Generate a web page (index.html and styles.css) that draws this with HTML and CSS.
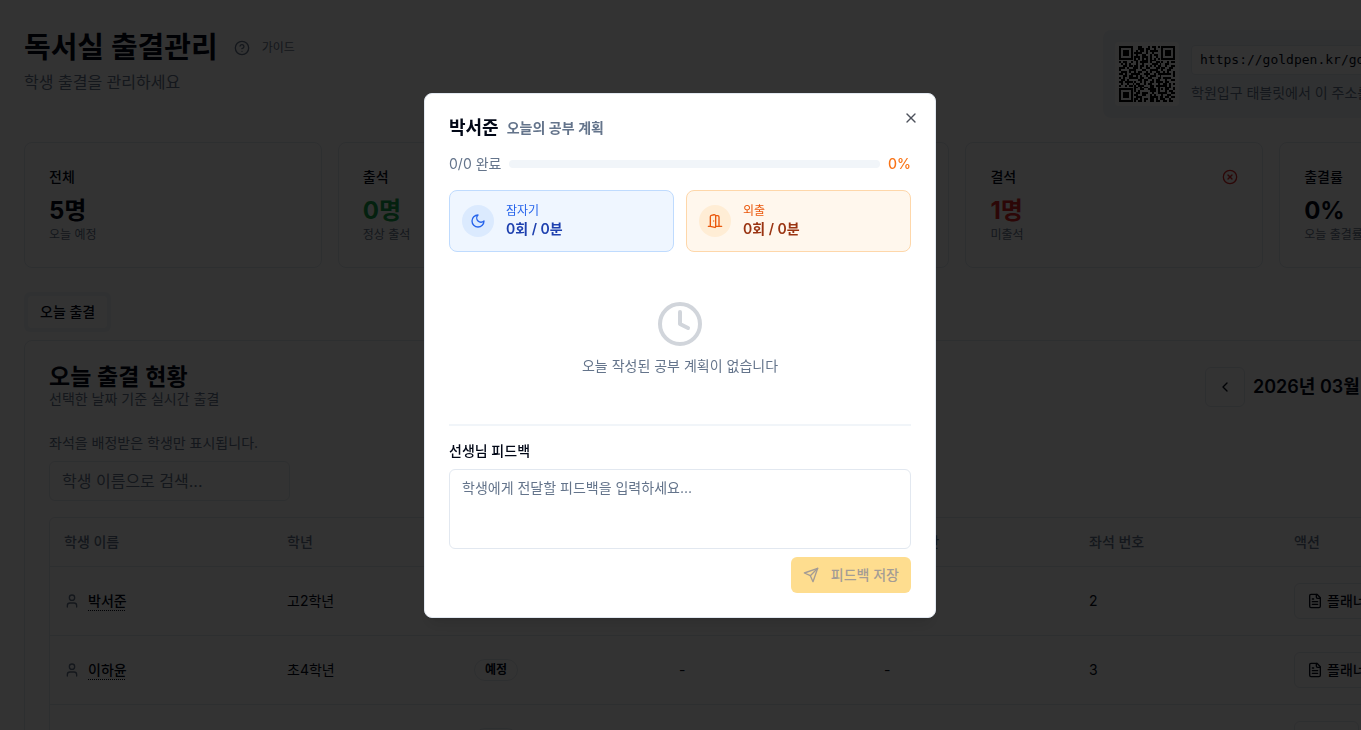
FILE: index.html
```html
<!DOCTYPE html>
<html lang="ko">
<head>
<meta charset="utf-8">
<title>독서실 출결관리</title>
<link rel="stylesheet" href="styles.css">
</head>
<body>
<main class="page">
  <header class="page-header">
    <div>
      <div class="title-row">
        <h1 class="page-title">독서실 출결관리</h1>
        <button class="guide" type="button">
          <svg class="icon" viewBox="0 0 24 24"><circle cx="12" cy="12" r="10"/><path d="M9.09 9a3 3 0 0 1 5.83 1c0 2-3 3-3 3"/><path d="M12 17h.01"/></svg>
          가이드
        </button>
      </div>
      <p class="page-subtitle">학생 출결을 관리하세요</p>
    </div>
    <section class="kiosk">
      <div class="qr-tile"><svg class="qr" id="qr" viewBox="0 0 29 29" shape-rendering="crispEdges" role="img" aria-label="QR"></svg></div>
      <div class="kiosk-info">
        <code class="kiosk-url">https://goldpen.kr/goldpen/attendance</code>
        <p class="kiosk-note">학원입구 태블릿에서 이 주소를 열어주세요</p>
      </div>
    </section>
  </header>

  <section class="stats">
    <article class="card stat"><h2 class="stat-label">전체</h2><p class="stat-value">5명</p><p class="stat-note">오늘 예정</p></article>
    <article class="card stat"><h2 class="stat-label">출석</h2><p class="stat-value green">0명</p><p class="stat-note">정상 출석</p></article>
    <article class="card stat"><h2 class="stat-label">지각</h2><p class="stat-value">0명</p><p class="stat-note">지각</p></article>
    <article class="card stat">
      <h2 class="stat-label">결석 <svg class="icon red" viewBox="0 0 24 24"><circle cx="12" cy="12" r="10"/><path d="m15 9-6 6"/><path d="m9 9 6 6"/></svg></h2>
      <p class="stat-value red">1명</p><p class="stat-note">미출석</p>
    </article>
    <article class="card stat"><h2 class="stat-label">출결률</h2><p class="stat-value">0%</p><p class="stat-note">오늘 출결률</p></article>
  </section>

  <div class="tabs"><button class="tab" type="button">오늘 출결</button></div>

  <section class="card today">
    <header class="today-header">
      <div>
        <h2 class="today-title">오늘 출결 현황</h2>
        <p class="muted">선택한 날짜 기준 실시간 출결</p>
      </div>
      <div class="date-nav">
        <button class="square-button" type="button" aria-label="이전 날짜"><svg class="icon" viewBox="0 0 24 24"><path d="m15 18-6-6 6-6"/></svg></button>
        <strong class="date">2026년 03월 05일 (목)</strong>
      </div>
    </header>
    <label class="muted search-label" for="search">좌석을 배정받은 학생만 표시됩니다.</label>
    <input class="search" id="search" type="text" placeholder="학생 이름으로 검색...">
    <div class="table-frame">
      <table class="students">
        <colgroup><col class="col-name"><col class="col-grade"><col class="col-mid"><col class="col-mid"><col class="col-mid"><col class="col-mid"><col></colgroup>
        <thead><tr><th>학생 이름</th><th>학년</th><th>상태</th><th>등원 시간</th><th>하원 시간</th><th>좌석 번호</th><th>액션</th></tr></thead>
        <tbody>
          <tr>
            <td><div class="student"><svg class="icon" viewBox="0 0 24 24"><path d="M19 21v-2a4 4 0 0 0-4-4H9a4 4 0 0 0-4 4v2"/><circle cx="12" cy="7" r="4"/></svg><button class="name" type="button">박서준</button></div></td>
            <td>고2학년</td><td><span class="badge">예정</span></td><td>-</td><td>-</td><td>2</td>
            <td><button class="planner" type="button"><svg class="icon" viewBox="0 0 24 24"><path d="M15 2H6a2 2 0 0 0-2 2v16a2 2 0 0 0 2 2h12a2 2 0 0 0 2-2V7Z"/><path d="M14 2v4a2 2 0 0 0 2 2h4"/><path d="M10 9H8"/><path d="M16 13H8"/><path d="M16 17H8"/></svg>플래너</button></td>
          </tr>
          <tr>
            <td><div class="student"><svg class="icon" viewBox="0 0 24 24"><path d="M19 21v-2a4 4 0 0 0-4-4H9a4 4 0 0 0-4 4v2"/><circle cx="12" cy="7" r="4"/></svg><button class="name" type="button">이하윤</button></div></td>
            <td>초4학년</td><td><span class="badge">예정</span></td><td>-</td><td>-</td><td>3</td>
            <td><button class="planner" type="button"><svg class="icon" viewBox="0 0 24 24"><path d="M15 2H6a2 2 0 0 0-2 2v16a2 2 0 0 0 2 2h12a2 2 0 0 0 2-2V7Z"/><path d="M14 2v4a2 2 0 0 0 2 2h4"/><path d="M10 9H8"/><path d="M16 13H8"/><path d="M16 17H8"/></svg>플래너</button></td>
          </tr>
          <tr>
            <td></td><td></td><td><span class="badge">예정</span></td><td></td><td></td><td></td>
            <td><button class="planner" type="button">플래너</button></td>
          </tr>
        </tbody>
      </table>
    </div>
  </section>
</main>

<div class="overlay">
  <section class="modal" role="dialog" aria-modal="true" aria-labelledby="modal-title">
    <button class="close" type="button" aria-label="닫기"><svg class="icon" viewBox="0 0 24 24"><path d="M18 6 6 18"/><path d="m6 6 12 12"/></svg></button>
    <h2 class="modal-title" id="modal-title">박서준 <span class="modal-subtitle">오늘의 공부 계획</span></h2>
    <div class="progress-row">
      <span>0/0 완료</span>
      <div class="progress" role="progressbar" aria-valuenow="0"></div>
      <span class="percent">0%</span>
    </div>
    <div class="tiles">
      <div class="tile sleep">
        <span class="tile-icon"><svg class="icon" viewBox="0 0 24 24"><path d="M12 3a6 6 0 0 0 9 9 9 9 0 1 1-9-9Z"/></svg></span>
        <div><p class="tile-label">잠자기</p><p class="tile-value">0회 / 0분</p></div>
      </div>
      <div class="tile outing">
        <span class="tile-icon"><svg class="icon" viewBox="0 0 24 24"><path d="M13 4h3a2 2 0 0 1 2 2v14"/><path d="M2 20h3"/><path d="M13 20h9"/><path d="M10 12v.01"/><path d="M13 4.562v16.157a1 1 0 0 1-1.242.97L5 20V5.562a2 2 0 0 1 1.515-1.94l4-1A2 2 0 0 1 13 4.561Z"/></svg></span>
        <div><p class="tile-label">외출</p><p class="tile-value">0회 / 0분</p></div>
      </div>
    </div>
    <div class="empty">
      <svg class="icon clock" viewBox="0 0 24 24"><circle cx="12" cy="12" r="10"/><path d="M12 6v6l4 2"/></svg>
      <p>오늘 작성된 공부 계획이 없습니다</p>
    </div>
    <form class="feedback">
      <label class="feedback-label" for="feedback">선생님 피드백</label>
      <textarea class="feedback-text" id="feedback" placeholder="학생에게 전달할 피드백을 입력하세요..."></textarea>
      <button class="save" type="button" disabled><svg class="icon" viewBox="0 0 24 24"><path d="m22 2-7 20-4-9-9-4Z"/><path d="M22 2 11 13"/></svg>피드백 저장</button>
    </form>
  </section>
</div>
<script src="qr.js"></script>
</body>
</html>
```

FILE: styles.css
```css
* { box-sizing: border-box; }

body {
  margin: 0;
  height: 100vh;
  overflow: hidden;
  background: #fff;
  color: #020817;
  font: 14px/20px Inter, "Noto Sans CJK KR", sans-serif;
}

h1, h2, p { margin: 0; }

button, input, textarea { font: inherit; color: inherit; }

button { padding: 0; border: 0; background: none; }

.icon {
  width: 16px;
  height: 16px;
  flex: none;
  fill: none;
  stroke: currentColor;
  stroke-width: 2;
  stroke-linecap: round;
  stroke-linejoin: round;
}

.muted { color: #64748b; }
.green { color: #16a34a; }
.red { color: #dc2626; }

.page {
  min-width: 1601px;
  padding: 30px 24px 24px;
}

.page-header {
  display: flex;
  justify-content: space-between;
  margin-bottom: 24px;
}

.title-row { display: flex; align-items: center; gap: 16px; }
.page-title { font-size: 29px; line-height: 36px; font-weight: 700; }
.guide {
  display: flex;
  align-items: center;
  gap: 12px;
  color: #64748b;
  font-size: 12px;
  line-height: 16px;
}
.page-subtitle { margin-top: 4px; font-size: 16px; line-height: 24px; color: #64748b; }

.kiosk {
  display: flex;
  align-items: center;
  gap: 12px;
  flex: 0 0 474px;
  padding: 12px;
  border-radius: 8px;
  background: #f1f5f9;
}
.qr-tile {
  display: flex;
  padding: 4px;
  border-radius: 4px;
  background: #fff;
}
.qr { width: 56px; height: 56px; }
.kiosk-info { flex: 1; }
.kiosk-url {
  display: block;
  margin-bottom: 8px;
  padding: 4px 8px;
  border: 1px solid #e2e8f0;
  border-radius: 4px;
  background: #fff;
  font: 13px/20px "DejaVu Sans Mono", monospace;
}
.kiosk-note { color: #64748b; }

.card { border: 1px solid #e2e8f0; border-radius: 8px; background: #fff; }

.stats {
  display: grid;
  grid-template-columns: repeat(5, 1fr);
  gap: 16px;
  margin-bottom: 24px;
}
.stat { padding: 24px; }
.stat-label {
  display: flex;
  align-items: center;
  justify-content: space-between;
  margin-bottom: 8px;
  font-size: 14px;
  font-weight: 500;
}
.stat-value { font-size: 24px; line-height: 32px; font-weight: 700; }
.stat-note { font-size: 12px; line-height: 16px; color: #64748b; }

.tabs {
  display: inline-flex;
  padding: 4px;
  border-radius: 6px;
  background: #f1f5f9;
  vertical-align: top;
}
.tab {
  padding: 6px 12px;
  border-radius: 4px;
  background: #fff;
  font-weight: 500;
}

.today { margin-top: 8px; padding: 24px; }
.today-header {
  display: flex;
  align-items: center;
  justify-content: space-between;
  margin-bottom: 24px;
}
.today-title { font-size: 23px; line-height: 24px; font-weight: 600; }
.date-nav { display: flex; align-items: center; gap: 8px; flex: 0 0 347px; }
.square-button {
  display: grid;
  place-items: center;
  width: 40px;
  height: 40px;
  border: 1px solid #e2e8f0;
  border-radius: 6px;
}
.date { font-size: 18px; line-height: 28px; font-weight: 600; }

.search-label { display: block; margin-bottom: 8px; }
.search {
  display: block;
  width: 241px;
  height: 40px;
  margin-bottom: 16px;
  padding: 8px 12px;
  border: 1px solid #e2e8f0;
  border-radius: 6px;
  background: #fff;
  font-size: 16px;
}
.search::placeholder, .feedback-text::placeholder { color: #64748b; opacity: 1; }

.table-frame { border: 1px solid #e2e8f0; border-radius: 6px; }
.students {
  width: 100%;
  table-layout: fixed;
  border-collapse: collapse;
}
.col-name { width: 223px; }
.col-grade { width: 187px; }
.col-mid { width: 205px; }
.students th {
  height: 48px;
  padding: 0 14px;
  text-align: left;
  font-weight: 500;
  color: #64748b;
}
.students td { height: 69px; padding: 16px 14px; }
.students tr { border-bottom: 1px solid #e2e8f0; }

.student { display: flex; align-items: center; gap: 8px; color: #64748b; }
.name {
  color: #020817;
  font-weight: 500;
  text-decoration: underline dotted 1px;
  text-underline-offset: 4px;
}
.badge {
  display: inline-block;
  padding: 2px 10px;
  border: 1px solid #e2e8f0;
  border-radius: 11px;
  color: #020817;
  font-size: 12px;
  line-height: 16px;
  font-weight: 600;
  vertical-align: middle;
}
.planner {
  display: inline-flex;
  align-items: center;
  gap: 4px;
  height: 36px;
  padding: 0 12px;
  border: 1px solid #e2e8f0;
  border-radius: 6px;
  font-weight: 500;
  vertical-align: middle;
}

.overlay {
  position: fixed;
  inset: 0;
  display: flex;
  align-items: center;
  justify-content: center;
  padding: 0 1px 20px 0;
  background: rgba(0, 0, 0, 0.8);
}
.modal {
  position: relative;
  display: flex;
  flex-direction: column;
  gap: 16px;
  width: 512px;
  padding: 24px;
  border: 1px solid #e2e8f0;
  border-radius: 8px;
  background: #fff;
  box-shadow: 0 10px 15px -3px rgba(0, 0, 0, 0.1), 0 4px 6px -4px rgba(0, 0, 0, 0.1);
}
.close {
  position: absolute;
  top: 16px;
  right: 16px;
  display: flex;
  opacity: 0.7;
}
.modal-title {
  display: flex;
  align-items: center;
  gap: 8px;
  font-size: 18px;
  line-height: 20px;
  font-weight: 600;
}
.modal-subtitle { font-size: 14px; color: #64748b; }

.progress-row { display: flex; align-items: center; gap: 8px; color: #64748b; }
.progress { flex: 1; height: 8px; border-radius: 4px; background: #f1f5f9; }
.percent { color: #f97316; font-weight: 500; }

.tiles { display: grid; grid-template-columns: 1fr 1fr; gap: 12px; }
.tile {
  display: flex;
  align-items: center;
  gap: 12px;
  padding: 12px;
  border: 1px solid;
  border-radius: 8px;
}
.tile-icon {
  display: grid;
  place-items: center;
  width: 32px;
  height: 32px;
  border-radius: 50%;
}
.tile-label { font-size: 12px; line-height: 16px; }
.tile-value { font-weight: 600; }
.sleep { border-color: #bfdbfe; background: #eff6ff; color: #2563eb; }
.sleep .tile-icon { background: #dbeafe; }
.sleep .tile-value { color: #1e40af; }
.outing { border-color: #fed7aa; background: #fff7ed; color: #ea580c; }
.outing .tile-icon { background: #ffedd5; }
.outing .tile-value { color: #9a3412; }

.empty {
  display: flex;
  flex-direction: column;
  align-items: center;
  gap: 8px;
  padding: 32px 0;
  color: #64748b;
}
.clock { width: 48px; height: 48px; color: #d1d5db; }

.feedback {
  display: flex;
  flex-direction: column;
  gap: 8px;
  padding-top: 15px;
  border-top: 2px solid #f1f5f9;
}
.feedback-label { font-weight: 500; }
.feedback-text {
  height: 80px;
  padding: 8px 12px;
  border: 1px solid #e2e8f0;
  border-radius: 6px;
  resize: none;
}
.save {
  display: flex;
  align-items: center;
  align-self: flex-end;
  gap: 12px;
  height: 36px;
  padding: 0 12px;
  border-radius: 6px;
  background: #fdbb20;
  color: #4a3a2c;
  font-weight: 500;
  opacity: 0.5;
}
```

FILE: qr.js
```js
// One string per module row; "#" is a dark module.
const rows = [
  "#######...##...#.##.#.#######",
  "#.....#...###.##..#...#.....#",
  "#.###.#..#.##.#.####..#.###.#",
  "#.###.#.####..#..#....#.###.#",
  "#.###.#..#..##..#.##..#.###.#",
  "#.....#.###.###.#..#..#.....#",
  "#######.#.#.#.#.#.#.#.#######",
  "........##..###.###..........",
  "#.##..#..#.####.#..##.#..#.##",
  ".#.#.#...#..#....###.#..##...",
  "..##.##.##.##.#.#.#.##..#..##",
  "###.#..###.#..##...##.##..##.",
  "#....####...##..####..#..##..",
  ".###.#..#.##..#.#..##..#.#..#",
  "##.#..#####..###..#.#######.#",
  "..##.##..#.#..#.###..#......#",
  "#.#..#####.##..##...##.####..",
  ".##.#.....##.##..#.##...#..##",
  "##.####.#..#.#..##.####.##...",
  ".#..#..#.##..#.##...#..##.#.#",
  "#..#.##.#.###...##.######.#..",
  "........##.#.##.##..#...###.#",
  "#######.#..##..####.#.#.##..#",
  "#.....#.#.#.....###.#...#.##.",
  "#.###.#..##.###..#..#####..##",
  "#.###.#.##..##..#.#...#..##..",
  "#.###.#..###....####.##.##.##",
  "#.....#.##.#.##.##.#.###..#..",
  "#######.#.##.#..##.##..##.##.",
];

const path = document.createElementNS("http://www.w3.org/2000/svg", "path");
let d = "";
rows.forEach((row, y) => {
  [...row].forEach((cell, x) => {
    if (cell === "#") d += `M${x} ${y}h1v1h-1z`;
  });
});
path.setAttribute("d", d);
document.getElementById("qr").append(path);
```
